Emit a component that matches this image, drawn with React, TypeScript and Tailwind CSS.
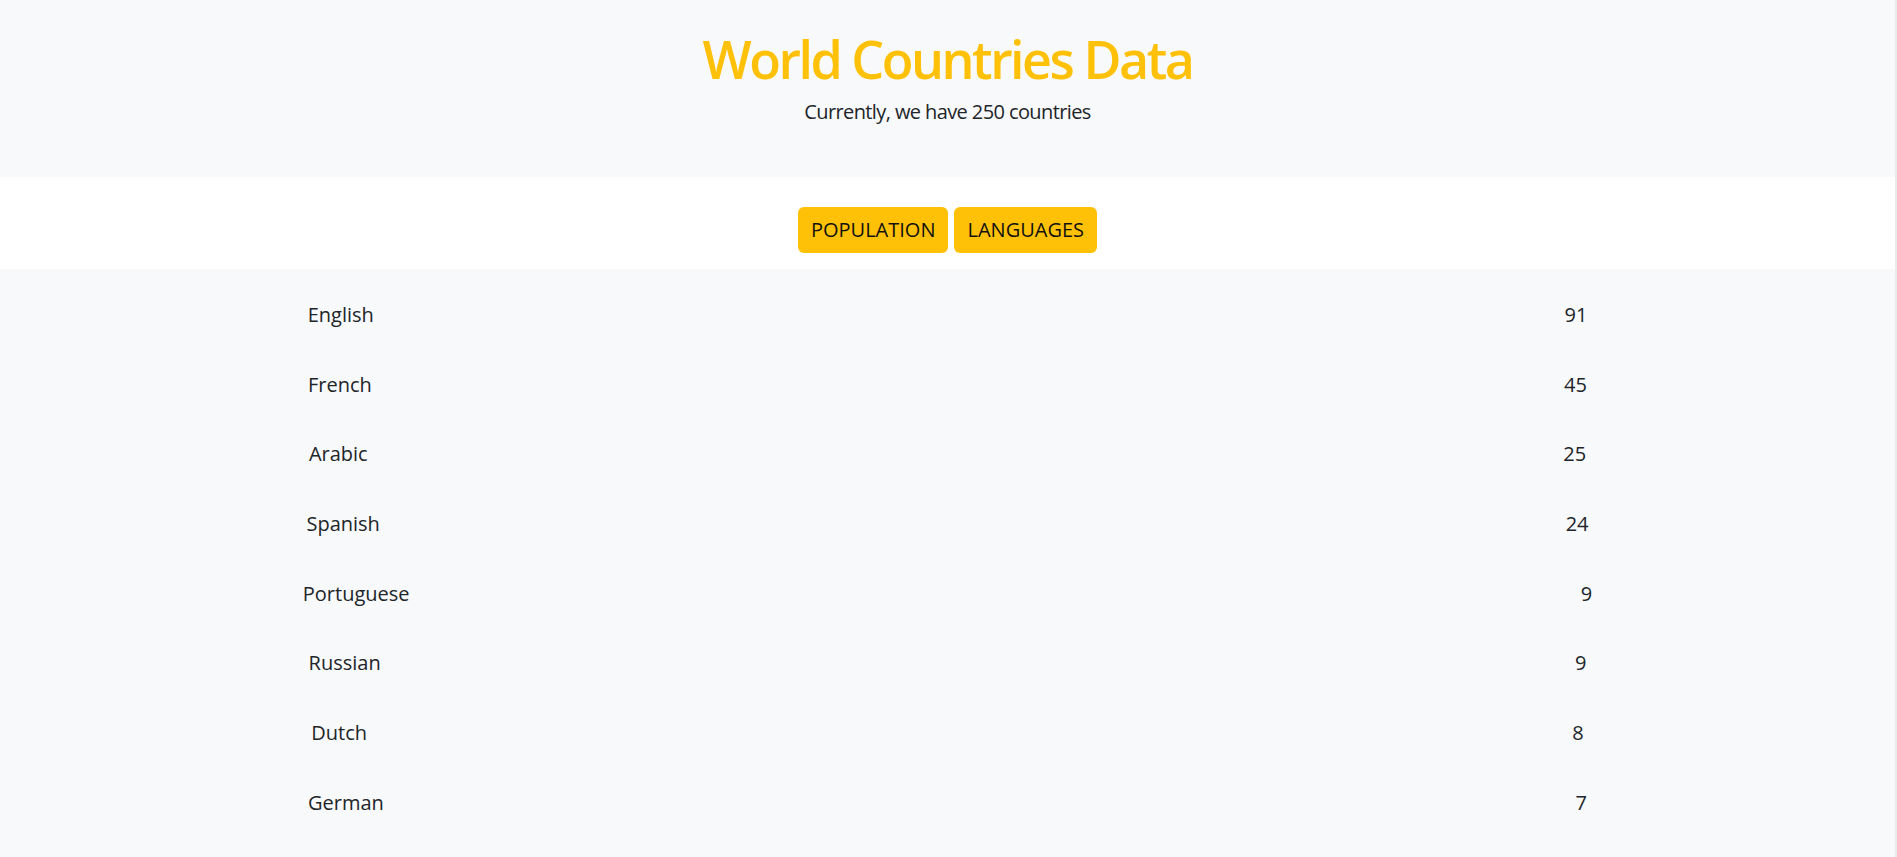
const languages = [
  { name: "English", count: 91 },
  { name: "French", count: 45 },
  { name: "Arabic", count: 25 },
  { name: "Spanish", count: 24 },
  { name: "Portuguese", count: 9 },
  { name: "Russian", count: 9 },
  { name: "Dutch", count: 8 },
  { name: "German", count: 7 },
];

export default function App() {
  return (
    <div className="flex min-h-screen bg-[#f8f9fa] font-['Open_Sans',sans-serif] text-[#212529]">
      <div className="flex-1">
        <header className="h-[177px] pt-[31px] text-center">
          <h1 className="text-[52px] leading-[56px] font-semibold tracking-[-2.5px] text-[#ffc107]">
            World Countries Data
          </h1>
          <p className="mt-[10px] text-[20px] leading-[30px] tracking-[-0.6px]">
            Currently, we have 250 countries
          </p>
        </header>

        <nav className="flex h-[92px] justify-center gap-[6px] bg-white pt-[30px]">
          <button className="h-[46px] rounded-md bg-[#ffc107] px-[13px] text-[20px] leading-[30px] text-[#111] uppercase">
            Population
          </button>
          <button className="h-[46px] rounded-md bg-[#ffc107] px-[13px] text-[20px] leading-[30px] text-[#111] uppercase">
            Languages
          </button>
        </nav>

        <main className="px-[10px] pt-[11px]">
          {languages.map((lang) => (
            <div
              key={lang.name}
              className="flex h-[69.7px] items-center justify-around text-[20px] leading-[30px]"
            >
              <span>{lang.name}</span>
              {/* bar placeholder, empty in this view */}
              <div />
              <span>{lang.count}</span>
            </div>
          ))}
        </main>
      </div>
      <div className="w-[2px] bg-[#ebebeb]" />
    </div>
  );
}
